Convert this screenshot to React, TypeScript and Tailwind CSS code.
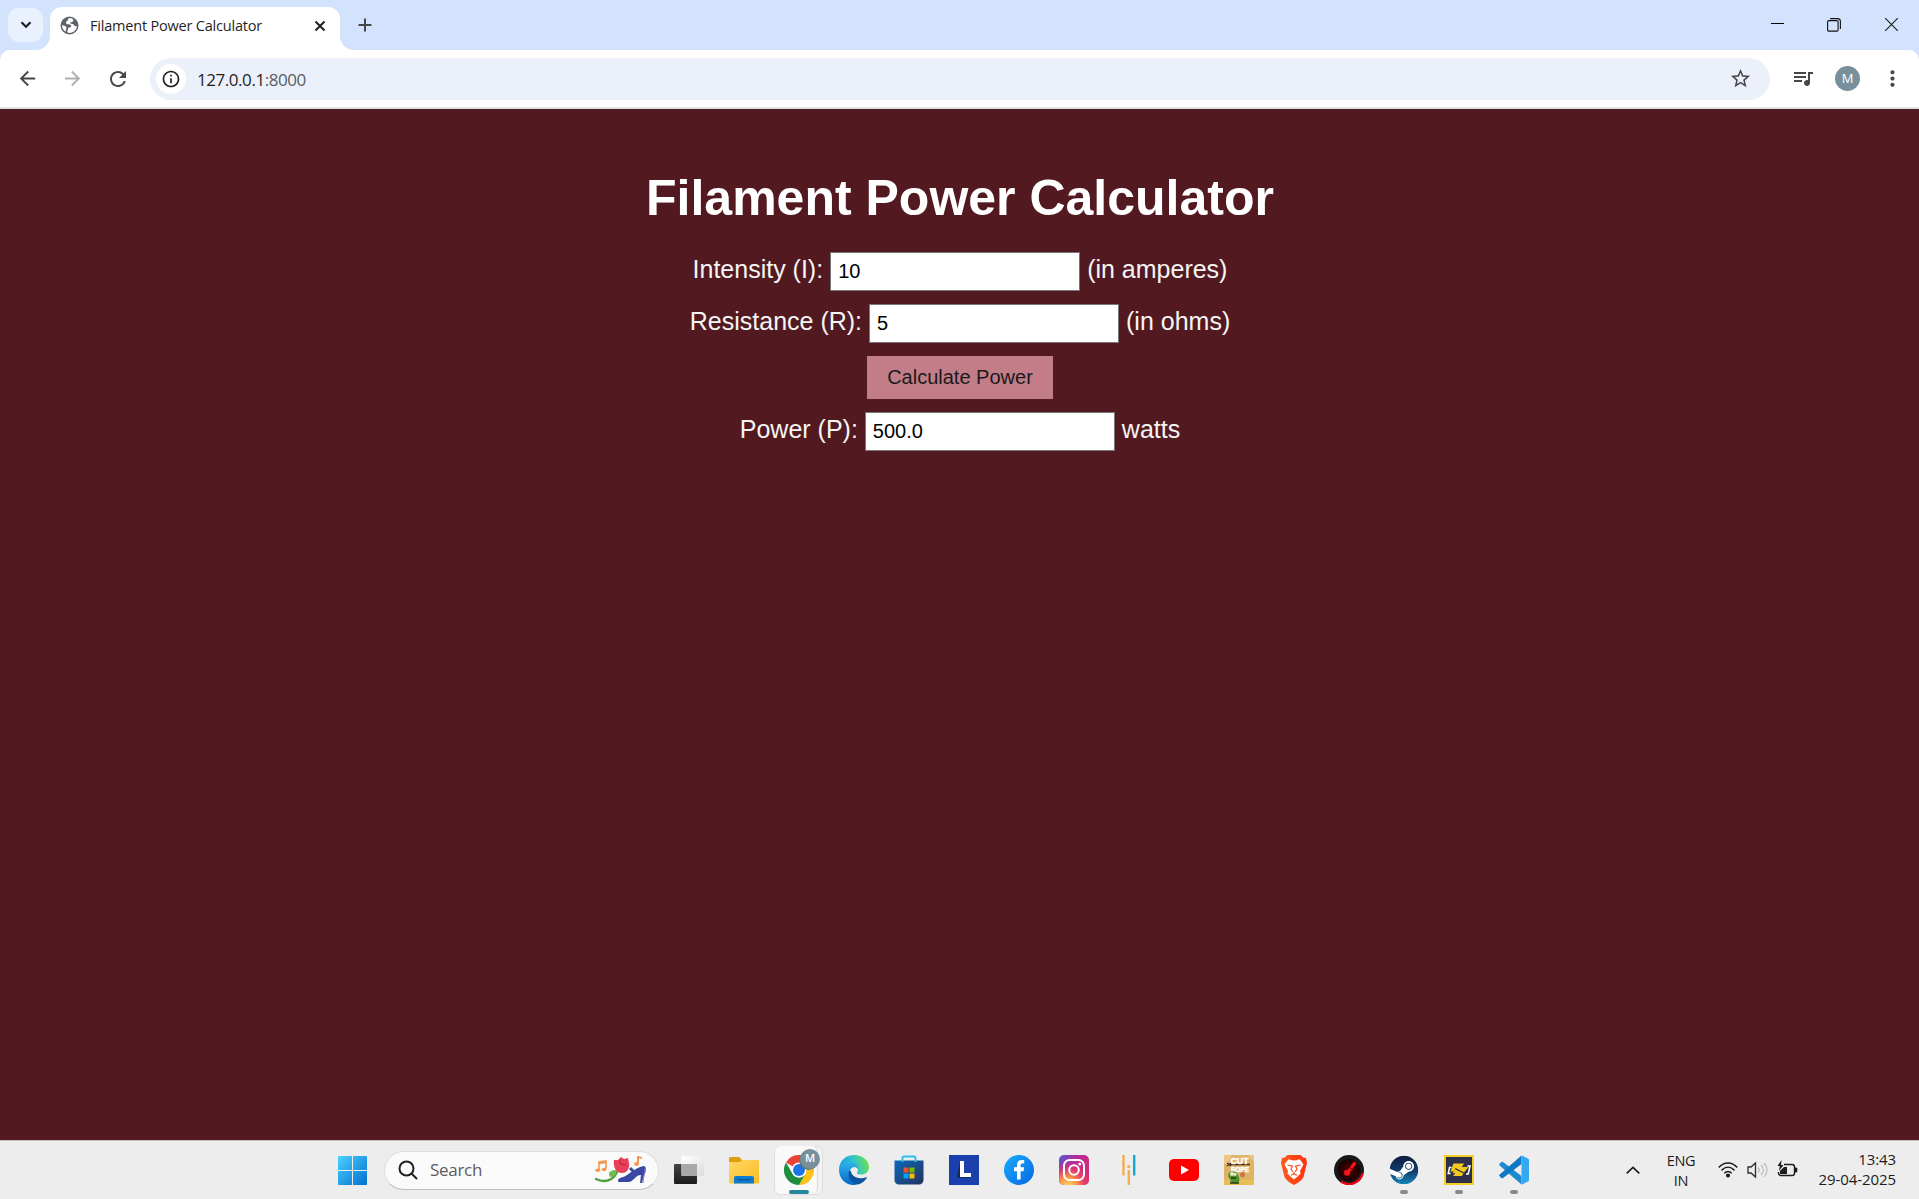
import React from "react";
import { MdArrowBack, MdArrowForward, MdRefresh, MdInfoOutline, MdStarOutline, MdQueueMusic, MdMoreVert } from "react-icons/md";
import { SiSteam } from "react-icons/si";

function Globe() {
  return (
    <svg width="19" height="19" viewBox="0 0 19 19" fill="none">
      <circle cx="9.500" cy="9.500" r="9" fill="#5f6368" />
      <path d="M10.500 2C8 2.200 7.500 3.500 7.800 4.800 5.500 5 5.500 8 7.500 8.300c1.500.2 3-.1 3.600 1.200.4 1.200-.6 2-2.100 2.100-1 .1-.7 1.800-1.700 3.400-.3.800.3 1.800 2.200 1.900 4.200 0 7.400-3.200 7.400-6.900-1.400.7-2.300.4-2.800-.8-.5-1.400-2.300-1.200-3.600-1.600-.9-.4-.4-1.300.6-1.400 1.500-.1 2.400-.9 2.300-2.500C12.500 2.800 11.500 2.200 10.500 2ZM2.100 9.300c1.800.2 4.400.9 4.400 2.200 0 1.100-.9 1.500-.7 4.200C3.300 14.300 1.900 12 2.100 9.300Z" fill="#fff" />
    </svg>
  );
}

function TabStrip() {
  return (
    <div className="flex h-[50px] items-end bg-[#d3e3fd]">
      <div className="flex h-[50px] w-[50px] items-start pl-2 pt-2">
        <button className="flex h-[34px] w-[35px] items-center justify-center rounded-[11px] bg-[#e9f0fe]">
          <svg width="12" height="8" viewBox="0 0 12 8" fill="none" stroke="#1f1f1f" strokeWidth="2.2">
            <path d="M1.5 1.2 6 5.7l4.500-4.500" />
          </svg>
        </button>
      </div>
      <div className="relative flex h-[43px] w-[290px] items-center rounded-t-[12px] bg-white pb-[6px] pl-[10px] pr-[14px]">
        <svg className="absolute -left-[14px] bottom-0" width="14" height="14"><path d="M14 0v14H0A14 14 0 0 0 14 0Z" fill="#fff" /></svg>
        <svg className="absolute -right-[14px] bottom-0" width="14" height="14"><path d="M0 0v14h14A14 14 0 0 1 0 0Z" fill="#fff" /></svg>
        <Globe />
        <span className="ml-[11px] flex-1 whitespace-nowrap text-[14.500px] tracking-[-0.200px] text-[#1f1f1f]">Filament Power Calculator</span>
        <svg width="12" height="12" viewBox="0 0 12 12" stroke="#1f1f1f" strokeWidth="2"><path d="M1.500 1.500l9 9m0-9-9 9" /></svg>
      </div>
      <div className="flex h-[50px] flex-1 items-center pl-[18px]">
        <svg width="14" height="14" viewBox="0 0 14 14" stroke="#474747" strokeWidth="2"><path d="M7 .5v13M.5 7h13" /></svg>
      </div>
      <div className="flex h-[50px] items-center pb-px pr-[21px]">
        <svg className="mr-[43px]" width="13" height="13" viewBox="0 0 13 13" stroke="#000"><path d="M0 5.500h13" /></svg>
        <svg className="mr-[44px]" width="14" height="14" viewBox="0 0 14 14" fill="none" stroke="#111" strokeWidth="1.100"><rect x=".6" y="2.600" width="10.500" height="10.500" rx="1.200" /><path d="M3 .6h7.500a2.900 2.900 0 0 1 2.900 2.900V11" /></svg>
        <svg width="13" height="13" viewBox="0 0 13 13" stroke="#222" strokeWidth="1.200"><path d="m0 0 13 13M13 0 0 13" /></svg>
      </div>
    </div>
  );
}

function Toolbar() {
  return (
    <div className="bg-[#d3e3fd]">
      <div className="flex h-[59px] items-center rounded-t-[10px] border-b-2 border-[#dce5e1] bg-white">
        <MdArrowBack className="ml-[16px] size-[23px] text-[#474747]" />
        <MdArrowForward className="ml-[22px] size-[23px] text-[#b0b0b0]" />
        <MdRefresh className="ml-[22px] size-[24px] text-[#474747]" />
        <div className="ml-[20px] flex h-[42px] w-[1620px] items-center rounded-full bg-[#ebf0fa] pl-[6px] pr-[18px]">
          <div className="flex size-[30px] items-center justify-center rounded-full bg-white">
            <MdInfoOutline className="size-[20px] text-[#1f1f1f]" />
          </div>
          <div className="ml-[11px] flex-1 pt-[2px] text-[17px] tracking-[-0.450px] text-[#1f1f1f]">
            127.0.0.1<span className="text-[#5a5d61]">:8000</span>
          </div>
          <MdStarOutline className="size-[23px] text-[#474747]" />
        </div>
        <MdQueueMusic className="mb-[2px] ml-[21px] size-[24px] text-[#474747]" />
        <div className="ml-[20px] flex size-[25px] items-center justify-center rounded-full bg-[#78909c] text-[13px] text-white">M</div>
        <MdMoreVert className="ml-[20px] size-[25px] text-[#474747]" />
      </div>
    </div>
  );
}

function Field({ label, value, unit }: { label: string; value: string; unit: string }) {
  return (
    <div className="flex items-start justify-center gap-[7px]">
      <label className="whitespace-pre leading-[35px]">{label}</label>
      <input
        className="h-[39px] w-[250px] border border-[#767676] bg-white px-[7px] text-[20px] text-black outline-none"
        defaultValue={value}
      />
      <span className="leading-[35px]">{unit}</span>
    </div>
  );
}

function Calculator() {
  return (
    <main className="flex flex-1 flex-col items-center bg-[#521a20] pl-px pt-[60px] font-['Liberation_Sans',Arial,sans-serif] text-[25px] text-[#f5f5f5]">
      <h1 className="text-[50px] font-bold leading-[58px] text-white">Filament Power Calculator</h1>
      <div className="mt-[25px] flex flex-col items-center gap-[13px]">
        <Field label="Intensity (I):" value="10" unit="(in amperes)" />
        <Field label="Resistance (R):" value="5" unit="(in ohms)" />
        <button className="h-[43px] w-[186px] bg-[#c27d88] pb-[2px] text-[20px] text-[#1a1a1a]">Calculate Power</button>
        <Field label="Power (P):" value="500.0" unit="watts" />
      </div>
    </main>
  );
}

function WindowsLogo() {
  return (
    <svg width="29" height="29" viewBox="0 0 29 29">
      <defs><linearGradient id="win" x1="0" y1="0" x2="1" y2="1" gradientUnits="objectBoundingBox"><stop stopColor="#4cd1ff" /><stop offset="1" stopColor="#0070d0" /></linearGradient></defs>
      <path d="M1 0h13v14H0V1a1 1 0 0 1 1-1ZM15 0h13a1 1 0 0 1 1 1v13H15ZM0 15h14v14H1a1 1 0 0 1-1-1ZM15 15h14v13a1 1 0 0 1-1 1H15Z" fill="url(#win)" />
    </svg>
  );
}

function SearchArt() {
  return (
    <svg width="52" height="28" viewBox="0 0 52 28" fill="none">
      <path d="M4 14V6l7-1v8M4 7.500l7-1" stroke="#f29a55" strokeWidth="1.600" />
      <ellipse cx="2.800" cy="14.200" rx="2.500" ry="1.800" fill="#f29a55" /><ellipse cx="9" cy="13.500" rx="2.300" ry="1.800" fill="#f29a55" />
      <path d="M1 23c8 4 17 2 21-7" stroke="#4f9d3b" strokeWidth="2.300" strokeLinecap="round" />
      <path d="M15 21c-3-5 1-7 6-7 1 4-1 7-6 7Z" fill="#76bb52" />
      <path d="M19 4l4 0 3-3 3 2 4-1 1 5c1 5-2 10-7 10-6 0-9-6-8-13Z" fill="#e83f57" />
      <path d="M25 3c-1 4 1 6 6 6" stroke="#bd2845" strokeWidth="1.200" />
      <path d="M23 25c0-4 5-3 9-6 5-3 8-7 17-9 3 1 2 6 0 9l-2 8h-2l1-8c-6 0-7 7-13 7H25c-1 0-2 0-2-1Z" fill="#3949a3" />
      <path d="m35 12 6 6" stroke="#3949a3" strokeWidth="3" /><path d="M50 12c1 4-2 9-2 15" stroke="#a276cf" />
      <path d="M43 8V1l4 1" stroke="#f29a55" strokeWidth="2" /><ellipse cx="41.500" cy="8" rx="2.500" ry="2" fill="#f29a55" />
    </svg>
  );
}

function TaskView() {
  return (
    <svg width="30" height="30" viewBox="0 0 30 30">
      <defs>
        <linearGradient id="tvd" x1="0" y1="0" x2="0" y2="1"><stop stopColor="#444" /><stop offset="1" stopColor="#1c1c1c" /></linearGradient>
        <linearGradient id="tvl" x1="0" y1="0" x2="1" y2="1"><stop stopColor="#fff" /><stop offset="1" stopColor="#dcdcdc" /></linearGradient>
      </defs>
      <rect y="9" width="23" height="20" rx="1" fill="url(#tvd)" />
      <rect x="7.500" y="1" width="22.500" height="20" rx="1" fill="url(#tvl)" />
      <path d="M7.500 9H23v12H8.500a1 1 0 0 1-1-1Z" fill="#a9a9a9" />
    </svg>
  );
}

function Folder() {
  return (
    <svg width="30" height="30" viewBox="0 0 30 30">
      <defs><linearGradient id="fo" x1="0" y1="0" x2="1" y2="1"><stop stopColor="#ffd766" /><stop offset="1" stopColor="#fbbd21" /></linearGradient></defs>
      <path d="M0 3a1 1 0 0 1 1-1h9l3 3h16a1 1 0 0 1 1 1v4H0Z" fill="#dda00c" />
      <path d="M0 7h11l2-2h16a1 1 0 0 1 1 1v21a1.500 1.500 0 0 1-1.500 1.500h-27A1.500 1.500 0 0 1 0 27Z" fill="url(#fo)" />
      <path d="M5 28.500V23a2 2 0 0 1 2-2h16a2 2 0 0 1 2 2v5.500Z" fill="#0f7bd0" />
      <path d="M8.500 24.700h13" stroke="#07508f" strokeWidth="1.200" />
    </svg>
  );
}

function Chrome() {
  return (
    <svg width="30" height="30" viewBox="0 0 48 48">
      <path d="M24 24 3.200 12A24 24 0 0 1 44.800 12H24Z" fill="#ea4335" />
      <path d="M24 12h20.800A24 24 0 0 1 24 48l10.400-18Z" fill="#fbc116" />
      <path d="M3.200 12 13.600 30A12 12 0 0 0 34.400 30L24 48A24 24 0 0 1 3.200 12Z" fill="#1e8e3e" />
      <circle cx="24" cy="24" r="12" fill="#fff" /><circle cx="24" cy="24" r="9.500" fill="#1a73e8" />
    </svg>
  );
}

function Edge() {
  return (
    <svg width="30" height="30" viewBox="0 0 30 30">
      <defs>
        <linearGradient id="e1" x1="0" y1=".6" x2="1" y2=".4"><stop stopColor="#1997dd" /><stop offset=".5" stopColor="#2dc3d2" /><stop offset="1" stopColor="#6fe04c" /></linearGradient>
        <linearGradient id="e2" x1="0" y1="0" x2="0" y2="1"><stop stopColor="#2db4ec" /><stop offset="1" stopColor="#0567c4" /></linearGradient>
      </defs>
      <path d="M0 14C1 5 7 0 15 0c9 0 15 6 15 12 0 5-3.500 7.500-8 7.500-4 0-5-1.500-4-3 2-4-1-7-7-7-5 0-9 2-11 4.500Z" fill="url(#e1)" />
      <path d="M0 15c0-5 4-8 10-8 6 0 10 4 9 8-4-5-9-2-8 4 1 5 3 8 7 10.600C8 32 0 24 0 15Z" fill="url(#e2)" />
      <path d="M10 16c-2 7 3 13 9 13.400 4-1 7-3.500 8.800-6.400.3-.6-.3-1-.8-.8-6 2.500-12.500 0-13-5.800-1.500-.5-3-.4-4-.4Z" fill="#0d53a0" />
      <path d="M19 15c-1-4-6-4-7 0-.5 4 3 7.500 8 7.800-2-2-2.500-3.200-2-5Z" fill="#ededed" />
    </svg>
  );
}

function Store() {
  return (
    <svg width="30" height="30" viewBox="0 0 30 30">
      <defs><linearGradient id="st" x1="0" y1="0" x2="1" y2="1"><stop stopColor="#0a69bb" /><stop offset="1" stopColor="#27315f" /></linearGradient></defs>
      <path d="M.5 5.500h29V25a4.500 4.500 0 0 1-4.500 4.500H5A4.500 4.500 0 0 1 .5 25Z" fill="url(#st)" />
      <path d="M8.500 7V3a1.500 1.500 0 0 1 1.500-1.500h10A1.500 1.500 0 0 1 21.500 3v4" fill="none" stroke="#31bff0" strokeWidth="2" />
      <path d="M9.500 12.500h5v5h-5Z" fill="#f25022" /><path d="M15.500 12.500h5v5h-5Z" fill="#7fba00" /><path d="M9.500 18.500h5v5h-5Z" fill="#00a4ef" /><path d="M15.500 18.500h5v5h-5Z" fill="#ffb900" />
    </svg>
  );
}

function LTile() {
  return (
    <svg width="30" height="30" viewBox="0 0 30 30">
      <rect width="30" height="30" fill="#1c3fae" />
      <path d="m11 6-3 17h13l1-2-9-1Z" fill="#0d2c55" />
      <path d="M11 6h4v12h7v4H11Z" fill="#fff" />
    </svg>
  );
}

function Facebook() {
  return (
    <svg width="30" height="30" viewBox="0 0 30 30">
      <defs><linearGradient id="fb" x1="0" y1="0" x2="1" y2="1"><stop stopColor="#18acfe" /><stop offset="1" stopColor="#0668e1" /></linearGradient></defs>
      <circle cx="15" cy="15" r="15" fill="url(#fb)" />
      <path d="M13 24.500v-8.300h-3v-4h3V10c0-3.200 1.600-5 4.700-5 1 0 2 .1 2.500.3v3.300h-1.700c-1.400 0-1.900.6-1.900 1.800v1.800h3.500l-.6 4h-2.900v8.300Z" fill="#fff" />
    </svg>
  );
}

function Instagram() {
  return (
    <svg width="30" height="30" viewBox="0 0 30 30" fill="none">
      <defs>
        <linearGradient id="ig" x1="0" y1="0" x2="1" y2=".6"><stop stopColor="#515bd4" /><stop offset=".45" stopColor="#b52b9c" /><stop offset="1" stopColor="#d62b77" /></linearGradient>
        <radialGradient id="ig2" cx=".3" cy="1.050" r=".85"><stop stopColor="#ffdc70" /><stop offset=".35" stopColor="#fb9a43" /><stop offset=".65" stopColor="#ee4560" stopOpacity=".8" /><stop offset="1" stopColor="#d62b77" stopOpacity="0" /></radialGradient>
      </defs>
      <rect width="30" height="30" rx="5" fill="url(#ig)" /><rect width="30" height="30" rx="5" fill="url(#ig2)" />
      <rect x="5" y="5" width="20" height="20" rx="5.500" stroke="#fff" strokeWidth="2" />
      <circle cx="15" cy="15" r="4.800" stroke="#fff" strokeWidth="2" /><circle cx="20.800" cy="9.200" r="1.400" fill="#fff" />
    </svg>
  );
}

function LijBars() {
  return (
    <svg width="30" height="30" viewBox="0 0 30 30">
      <path d="M8.300 0h2.400v20.500H8.300ZM13.600 15H16v15h-2.400Z" fill="#f2ae4d" /><path d="M19 0h2.400v20.500H19Z" fill="#15a8d2" />
      <circle cx="14.800" cy="11.500" r="1.600" fill="#f2ae4d" />
    </svg>
  );
}

function YouTube() {
  return (
    <svg width="30" height="22" viewBox="0 0 30 22"><rect width="30" height="22" rx="5" fill="#f00" /><path d="m12 6.500 8 4.500-8 4.500Z" fill="#fff" /></svg>
  );
}

function CutTheRope() {
  return (
    <svg width="30" height="30" viewBox="0 0 30 30">
      <rect width="30" height="30" fill="#dfb366" /><path d="M0 0h8L3 9H0ZM24 0h6v7Z" fill="#efc783" /><path d="M0 25h30v5H0Z" fill="#e9bd55" />
      <path d="m3 8 4 3m-4 0 4-3M6 9.500h20" stroke="#4b3522" strokeWidth="1.400" />
      <g fontFamily="Liberation Sans" fontWeight="700" textAnchor="middle" fill="#fff" stroke="#fff" strokeWidth=".5"><text x="15.500" y="8.800" fontSize="9.500" textLength="18" lengthAdjust="spacingAndGlyphs">CUT</text><text x="16" y="16.500" fontSize="8" textLength="18" lengthAdjust="spacingAndGlyphs">ROPE</text></g>
      <path d="M5 18c1-2 6-2 8 0 2 3 3 6 2 9-3 2-9 1-9-1 1-1 1-1-1-3-1-1-1-4 0-5Z" fill="#51922b" />
      <circle cx="8" cy="19" r="2" fill="#e5ecc7" /><circle cx="11" cy="19.300" r="1.600" fill="#e5ecc7" /><path d="M7 23h5M6 28h9" stroke="#213b15" strokeWidth="1.400" /><circle cx="18.500" cy="19.700" r="2.500" fill="#c7744d" />
    </svg>
  );
}

function Brave() {
  return (
    <svg width="30" height="30" viewBox="0 0 30 30">
      <defs><linearGradient id="br" x1="0" y1="0" x2="1" y2="0"><stop stopColor="#ff5a1c" /><stop offset="1" stopColor="#fb3410" /></linearGradient></defs>
      <path d="M8.500 0h13l3 2.800 2.500 0L28 8l-3.500 14c-.6 2.500-6.500 6.500-9.500 8-3-1.500-8.900-5.500-9.500-8L2 8l1-5.200 2.500 0Z" fill="url(#br)" />
      <path d="M15 5.500c3-.2 5-1.200 6-.8l3.500 4.800-3.500 6.500.5 2.500-3 3L15 24.500l-3.500-3-3-3L9 16 5.500 9.500 9 4.700c1-.4 3 .6 6 .8Z" fill="#fff" />
      <path d="m8.500 10 5 1.200-1.500 2.800 1.800 2.800M21.500 10l-5 1.200 1.500 2.800-1.800 2.800M12 20.200l3-1.600 3 1.600M15 17v1.600" fill="none" stroke="#fb4a18" strokeWidth="1.200" />
    </svg>
  );
}

function RedGauge() {
  return (
    <svg width="30" height="30" viewBox="0 0 30 30" fill="none">
      <defs><radialGradient id="rg"><stop stopColor="#560000" /><stop offset="1" stopColor="#180000" /></radialGradient></defs>
      <circle cx="15" cy="15" r="15" fill="#181818" /><path d="M7 26.500A14 14 0 0 0 28.700 18" stroke="#f00014" strokeWidth="2.300" />
      <circle cx="15" cy="15" r="11" fill="url(#rg)" />
      <path d="m14.500 16.500 6-8" stroke="#f5141c" strokeWidth="3.300" strokeLinecap="round" /><circle cx="13" cy="17.800" r="3" fill="#f5141c" />
      <path d="m15.500 12.300 3.300 2.300" stroke="#3a0000" strokeWidth=".8" />
    </svg>
  );
}

function Steam() {
  return (
    <svg width="30" height="30" viewBox="0 0 30 30">
      <defs><linearGradient id="sm" x1="0" y1="0" x2="0" y2="1"><stop stopColor="#101a3b" /><stop offset=".55" stopColor="#123e6c" /><stop offset="1" stopColor="#1387b8" /></linearGradient></defs>
      <circle cx="15" cy="15" r="13.500" fill="#fff" />
      <SiSteam x="0.7" y="0.7" size="28.600" style={{ fill: "url(#sm)" }} />
    </svg>
  );
}

function Bolt() {
  return (
    <svg width="30" height="30" viewBox="0 0 30 30">
      <rect x="1" y="1" width="28" height="28" fill="#2d3048" stroke="#f3ce26" strokeWidth="2" />
      <path d="M7.500 12.500H5.500L4.200 18.500h2.300M23.500 11H26l-1.800 8H22" fill="none" stroke="#fff" strokeWidth="1.500" />
      <path d="M9.500 8.500H20L17.800 12H21l3.500 0L20 17.500 11.500 13 10 16.500H6.500Z" fill="#f4c91e" />
      <path d="m11 14.300 8.500 4.200-1.800 2.500H9l2.500-2.700H8.800Z" fill="#f4c91e" />
    </svg>
  );
}

function VsCode() {
  return (
    <svg width="30" height="30" viewBox="0 0 30 30">
      <path d="M.6 8.800 2.400 7a1.200 1.200 0 0 1 1.600 0L22.500 21v8.500L.6 10.500a1.200 1.200 0 0 1 0-1.700Z" fill="#1f8ad2" />
      <path d="M.6 21.200 2.400 23a1.200 1.200 0 0 0 1.600 0L22.500 9V.5L.6 19.500a1.200 1.200 0 0 0 0 1.700Z" fill="#0f78c4" />
      <path d="M22.500.3 28.500 3.200A2 2 0 0 1 30 5v20a2 2 0 0 1-1.500 1.800l-6 2.900Z" fill="#35a9ef" />
    </svg>
  );
}

function Slot({ children, running }: { children: React.ReactNode; running?: boolean }) {
  return (
    <div className="relative flex h-[58px] w-[55px] items-center justify-center">
      {children}
      {running && <span className="absolute bottom-[5px] left-[24px] h-[4px] w-[8px] rounded-full bg-[#8a8a8a]" />}
    </div>
  );
}

function Taskbar() {
  return (
    <footer className="flex h-[59px] items-center border-t border-[#c5bcbd] bg-[#ededed] pl-[338px]">
      <WindowsLogo />
      <div className="ml-[17px] flex h-[39px] w-[275px] items-center rounded-full border border-[#dedede] border-b-[#bdbdbd] bg-[#fafafa] pl-[13px] pr-[11px]">
        <svg width="20" height="20" viewBox="0 0 20 20" fill="none" stroke="#222" strokeWidth="2"><circle cx="8.500" cy="8.500" r="7" /><path d="m13.500 13.500 5.500 5.500" /></svg>
        <span className="ml-[12px] flex-1 text-[17px] tracking-[-0.300px] text-[#5d5d5d]">Search</span>
        <SearchArt />
      </div>
      <div className="ml-[2px] flex">
        <Slot><TaskView /></Slot>
        <Slot><Folder /></Slot>
        <Slot>
          <div className="relative flex h-[49px] w-[49px] items-center justify-start rounded-[6px] border border-[#dedede] bg-[#f3f3f3]">
            <div className="flex h-[48px] w-[43px] items-center rounded-[6px] border-r border-[#d9d9d9] bg-[#f9f9f9] pl-[9px]"><div className="shrink-0"><Chrome /></div></div>
            <span className="absolute right-[4px] top-[4px] size-[19px] rounded-full bg-[#60747f]" />
            <span className="absolute right-[2px] top-[2px] flex size-[20px] items-center justify-center rounded-full bg-[#78909c] text-[11px] font-semibold text-white">M</span>
            <span className="absolute bottom-0 left-[14px] h-[4px] w-[20px] rounded-full bg-[#28869a]" />
          </div>
        </Slot>
        <Slot><Edge /></Slot>
        <Slot><Store /></Slot>
        <Slot><LTile /></Slot>
        <Slot><Facebook /></Slot>
        <Slot><Instagram /></Slot>
        <Slot><LijBars /></Slot>
        <Slot><YouTube /></Slot>
        <Slot><CutTheRope /></Slot>
        <Slot><Brave /></Slot>
        <Slot><RedGauge /></Slot>
        <Slot running><Steam /></Slot>
        <Slot running><Bolt /></Slot>
        <Slot running><VsCode /></Slot>
      </div>
      <div className="ml-auto flex items-center pr-[23px] text-[#1c1c1c]">
        <svg width="14" height="8" viewBox="0 0 14 8" fill="none" stroke="#1c1c1c" strokeWidth="1.600"><path d="m.7 7.300 6.300-6 6.300 6" /></svg>
        <div className="ml-[26px] w-[30px] pt-px text-center text-[14.500px] leading-[20px] tracking-[-0.300px]">ENG<br />IN</div>
        <svg className="ml-[22px]" width="20" height="16" viewBox="0 0 20 16" fill="none" stroke="#1c1c1c" strokeWidth="1.400"><path d="M.7 5.500C6-.6 14-.6 19.300 5.500M3.500 8.500c4-4.500 9-4.500 13 0M6.300 11.300c2.200-2.500 5.200-2.500 7.400 0" /><circle cx="10" cy="13.500" r="1.400" fill="#1c1c1c" /></svg>
        <svg className="ml-[9px]" width="21" height="18" viewBox="0 0 21 18" fill="none" strokeWidth="1.300"><path d="M1 6v6h3l4.500 4V2L4 6Z" stroke="#2b2b2b" /><path d="M11 6.500c1.500 1.500 1.500 3.500 0 5M14 4c3 3 3 7 0 10M17 2c4 4 4 10 0 14" stroke="#bdbdbd" /></svg>
        <svg className="mb-[2px] ml-[9px]" width="21" height="18" viewBox="0 0 21 18" fill="none" stroke="#1c1c1c" strokeWidth="1.400"><path d="M7 4.500h8A2.500 2.500 0 0 1 17.500 7v6a2.500 2.500 0 0 1-2.500 2.500H4A2.500 2.500 0 0 1 1.500 13v-1" /><path d="M3 14v-3l4-4h3v7Z" fill="#1c1c1c" stroke="none" /><path d="M18 7.500h1.500l.8 1v3l-.8 1H18Z" fill="#1c1c1c" stroke="none" /><path d="M4.500 0 .5 6h2.300L2 11l4.500-6H4Z" fill="#1c1c1c" stroke="none" /></svg>
        <div className="mb-[2px] ml-[20px] w-[78px] whitespace-nowrap text-right text-[15px] leading-[20px] tracking-[-0.080px]">13:43<br />29-04-2025</div>
      </div>
    </footer>
  );
}

export default function App() {
  return (
    <div className="flex h-[1199px] w-[1919px] flex-col overflow-hidden font-['Open_Sans','Noto_Sans',sans-serif]">
      <TabStrip />
      <Toolbar />
      <Calculator />
      <Taskbar />
    </div>
  );
}
